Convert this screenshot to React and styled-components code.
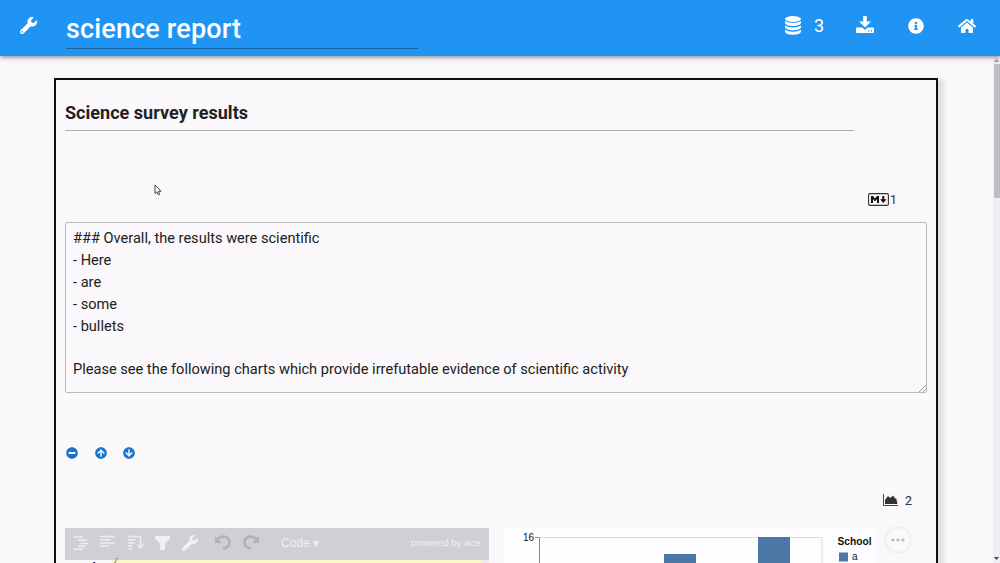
import React from "react";
import styled, { createGlobalStyle } from "styled-components";
import { FaWrench, FaInfoCircle, FaHome, FaArrowCircleUp, FaArrowCircleDown, FaMinusCircle } from "react-icons/fa";

const Global = createGlobalStyle`
  * { box-sizing: border-box; }
  body { margin: 0; background: #faf8fb; font-family: Roboto, "Liberation Sans", sans-serif; color: #212121; overflow: hidden; }
  svg { display: block; flex: none; }
`;
const Page = styled.div`
  height: 563px;
  display: flex;
  flex-direction: column;
  overflow: hidden;
`;
const Header = styled.header`
  height: 56px;
  flex: none;
  display: flex;
  background: #2094f3;
  color: #fff;
  box-shadow: 0 1px 5px rgba(0, 0, 0, 0.5);
  z-index: 1;
`;
const MenuButton = styled.div`
  width: 66px;
  padding: 17px 0 0 20px;
`;
const ReportName = styled.div`
  width: 352px;
  height: 49px;
  border-bottom: 1px solid #1a5f9a;
  font-size: 27px;
  font-weight: 500;
  letter-spacing: 0.15px;
  line-height: 30px;
  padding-top: 13.5px;
  white-space: nowrap;
`;
const Actions = styled.div`
  margin-left: auto;
  display: flex;
  height: 51px;
  align-items: center;
  padding-right: 24px;
`;
const Count = styled.span`
  font-size: 18px;
  margin: 0 31px 0 13px;
  width: 11px;
`;
const Action = styled.span`
  margin-left: ${(p) => p.$gap}px;
`;
const Body = styled.main`
  flex: 1;
  min-height: 0;
  display: flex;
  justify-content: space-between;
  padding-left: 54px;
`;
const Card = styled.section`
  margin-top: 22px;
  width: 884px;
  height: 600px;
  border: 2px solid #111;
  padding: 0 9px;
  box-shadow: 4px 4px 4px 2px rgba(0, 0, 0, 0.1);
`;
const Title = styled.h1`
  margin: 0;
  width: 789px;
  height: 51px;
  padding-top: 21px;
  border-bottom: 1px solid #b0aeb2;
  font-size: 18px;
  line-height: 24px;
  font-weight: 700;
  letter-spacing: 0.03px;
`;
const CellTag = styled.div`
  display: flex;
  align-items: center;
  justify-content: flex-end;
  height: 20px;
  margin-top: ${(p) => p.$top}px;
  padding-right: ${(p) => p.$right}px;
  gap: ${(p) => p.$gap}px;
  font-size: 13px;
  color: #333;
`;
const Markdown = styled.div`
  position: relative;
  margin-top: 13px;
  height: 171px;
  width: 862px;
  border: 1px solid #b9b8bb;
  border-radius: 2px;
  padding: 5px 7px;
  font-size: 14.58px;
  line-height: 21.9px;
  white-space: pre;
`;
const Grip = styled.svg`
  position: absolute;
  right: 0;
  bottom: 0;
`;
const CellActions = styled.div`
  display: flex;
  gap: 16.5px;
  margin: 54px 0 0 1px;
  height: 12px;
  color: #1874cd;
`;
const Panels = styled.div`
  display: flex;
  margin-top: 18px;
`;
const Editor = styled.div`
  width: 424px;
  font-family: "Liberation Sans", sans-serif;
`;
const Toolbar = styled.div`
  height: 32px;
  background: #d1cfd3;
  color: #f0eff2;
  display: flex;
  align-items: center;
  padding: 0 9px 3px 8px;
`;
const Mode = styled.span`
  font-size: 12px;
  margin-left: 21px;
`;
const Powered = styled.span`
  font-size: 9.8px;
  margin-left: auto;
`;
const Code = styled.div`
  display: flex;
  height: 12px;
  font: 10px/12px "Liberation Mono", monospace;
`;
const Gutter = styled.div`
  width: 47px;
  padding: 1px 0 0 26px;
  font-weight: 700;
  color: #111;
`;
const ActiveLine = styled.div`
  flex: 1;
  background: #fbf8c8;
  color: #888;
  padding-left: 1px;
  line-height: 8px;
`;
const EditorScroll = styled.div`
  width: 8px;
  background: #eeecf0;
`;
const Chart = styled.div`
  width: 372px;
  height: 80px;
  margin-left: 15px;
  background: #fefdff;
`;
const More = styled.div`
  width: 26px;
  height: 26px;
  margin: -1px 0 0 9px;
  border: 1px solid #ebe9ed;
  border-radius: 50%;
  box-shadow: 0 0 3px #eae8ec;
  display: flex;
  align-items: center;
  justify-content: center;
`;
const Scrollbar = styled.div`
  width: 7px;
  background: #f0eef2;
  display: flex;
  flex-direction: column;
  align-items: center;
  justify-content: space-between;
  padding: 2px 0;
`;
const Thumb = styled.div`
  width: 6px;
  height: 134px;
  background: #c0bec2;
  margin: 2px 0 auto;
`;

const Database = () => (
  <svg width="16" height="19" viewBox="0 0 16 19" fill="#fff">
    <ellipse cx="8" cy="3" rx="8" ry="2.9" />
    <path d="M0 5.1Q3 7.1 8 7.1T16 5.1V7Q15 9.900 8 9.900T0 7Z" />
    <path d="M0 9.400Q3 11.400 8 11.400T16 9.400V11.300Q15 14.200 8 14.200T0 11.300Z" />
    <path d="M0 13.700Q3 15.700 8 15.700T16 13.700V15.700Q15 18.700 8 18.700T0 15.700Z" />
  </svg>
);
const Download = () => (
  <svg width="18" height="19" viewBox="0 0 18 19">
    <path fill="#fff" d="M7.200 0h3.600v5.500H15L9 11.500 3 5.500h4.200Z" />
    <path fill="#fff" d="M1 11.500h5.200L9 14l2.800-2.500H17q1 0 1 1V16q0 1-1 1H1q-1 0-1-1v-3.500q0-1 1-1Z" />
    <path fill="#2094f3" d="M12 14.300h1.300v1.300H12zM14.700 14.300H16v1.300h-1.300z" />
  </svg>
);
const MarkdownIcon = () => (
  <svg width="21" height="13" viewBox="0 0 21 13">
    <rect x=".6" y=".6" width="19.800" height="11.800" rx="1.400" fill="none" stroke="#333" strokeWidth="1.100" />
    <path fill="#111" d="M3 10V3h2l2 2.600L9 3h2v7H9V6L7 8.400 5 6v4ZM14.300 3h2v3.300h2.200l-3.200 3.700-3.200-3.700h2.200Z" />
  </svg>
);
const AreaChart = () => (
  <svg width="15" height="12" viewBox="0 0 15 12">
    <path d="M.5 0v11.500H15" fill="none" stroke="#444" />
    <path fill="#333" d="M2 10V6l3-4 2.200 2 3-2.500L12 4.500l1.200-.3L14.500 10Z" />
  </svg>
);
const EditorIcons = () => (
  <svg width="187" height="20" viewBox="0 0 187 20">
    <g stroke="#efedf1" strokeWidth="1.500" fill="none">
      <path d="M0 4h10M5 7.200h9M7 10.400h8M5 13.300h8M0 16h10" />
      <path d="M27 4h15.500M27 7.200h11M27 10.400h15M27 13.600h9" transform="translate(0 -.5)" />
      <path d="M55 3.500h11M55 6.700h8M55 9.900h7M55 13h5M55 16h4" />
      <path d="M67.500 3v12M64.500 11.500l3 3.500 3-3.500" />
    </g>
    <path fill="#f2f0f4" d="M82 3h15v2.500l-5.200 5.500v6h-4.600v-6L82 5.500Z" />
    <FaWrench x="109" y="2" width="15" height="15" color="#f2f0f4" />
    <g fill="none" stroke="#b4b2b6" strokeWidth="2.700">
      <path d="M144.500 6.500C149 1.500 156.500 3.500 156.500 9.500Q156.500 14.500 150 15.500" />
      <path d="M183.500 6.500C179 1.500 171.500 3.500 171.500 9.500Q171.500 14.500 178 15.500" />
    </g>
    <path fill="#b4b2b6" d="M142 3v7h7ZM186 3v7h-7Z" />
  </svg>
);
const BarChart = () => (
  <svg width="372" height="36" viewBox="0 0 372 36" fontFamily="Liberation Sans, sans-serif" fontSize="10" fill="#111">
    <text x="19" y="12.500">16</text>
    <path d="M36 9.500h282V36" fill="none" stroke="#dddce0" />
    <path d="M31 9.500h4.500V36" fill="none" stroke="#888" />
    <rect x="160" y="26" width="32" height="10" fill="#4c78a8" />
    <rect x="254" y="9" width="32" height="27" fill="#4c78a8" />
    <text x="333.500" y="17" fontWeight="700" fontSize="10.200">School</text>
    <rect x="335" y="24.500" width="9" height="9" fill="#4c78a8" />
    <text x="348" y="32">a</text>
  </svg>
);
const Pointer = styled.svg`
  position: absolute;
  left: 154px;
  top: 184px;
`;

export default function App() {
  return (
    <Page>
      <Global />
      <Header>
        <MenuButton><FaWrench size={17} /></MenuButton>
        <ReportName>science report</ReportName>
        <Actions>
          <Database />
          <Count>3</Count>
          <Action $gap={0}><Download /></Action>
          <Action $gap={34}><FaInfoCircle size={16} /></Action>
          <Action $gap={34}><FaHome size={18} /></Action>
        </Actions>
      </Header>
      <Body>
        <Card>
          <Title>Science survey results</Title>
          <CellTag $top={58} $right={30} $gap={1}><MarkdownIcon />1</CellTag>
          <Markdown>
            {"### Overall, the results were scientific\n- Here\n- are\n- some\n- bullets\n\nPlease see the following charts which provide irrefutable evidence of scientific activity"}
            <Grip width="7" height="7"><path d="M0 7L7 0M4 7l3-3" stroke="#888" strokeWidth=".8" /></Grip>
          </Markdown>
          <CellActions>
            <FaMinusCircle size={12} />
            <FaArrowCircleUp size={12} />
            <FaArrowCircleDown size={12} />
          </CellActions>
          <CellTag $top={31} $right={15} $gap={7}><AreaChart />2</CellTag>
          <Panels>
            <Editor>
              <Toolbar>
                <EditorIcons />
                <Mode>Code ▾</Mode>
                <Powered>powered by ace</Powered>
              </Toolbar>
              <Code>
                <Gutter>1</Gutter>
                <ActiveLine>{"{"}</ActiveLine>
                <EditorScroll />
              </Code>
            </Editor>
            <Chart><BarChart /></Chart>
            <More>
              <svg width="14" height="4" fill="#bbb9bd"><circle cx="2" cy="2" r="1.600" /><circle cx="7" cy="2" r="1.600" /><circle cx="12" cy="2" r="1.600" /></svg>
            </More>
          </Panels>
        </Card>
        <Scrollbar>
          <svg width="5" height="4"><path d="M0 4l2.500-3L5 4Z" fill="#999" /></svg>
          <Thumb />
          <svg width="5" height="4"><path d="M0 0h5L2.500 3Z" fill="#444" /></svg>
        </Scrollbar>
      </Body>
      <Pointer width="8" height="12" viewBox="0 0 8 12"><path d="M1 1v8.500l2-1.700 1.200 3 1.500-.6-1.200-2.900H7Z" fill="#fff" stroke="#333" strokeWidth=".9" /></Pointer>
    </Page>
  );
}
